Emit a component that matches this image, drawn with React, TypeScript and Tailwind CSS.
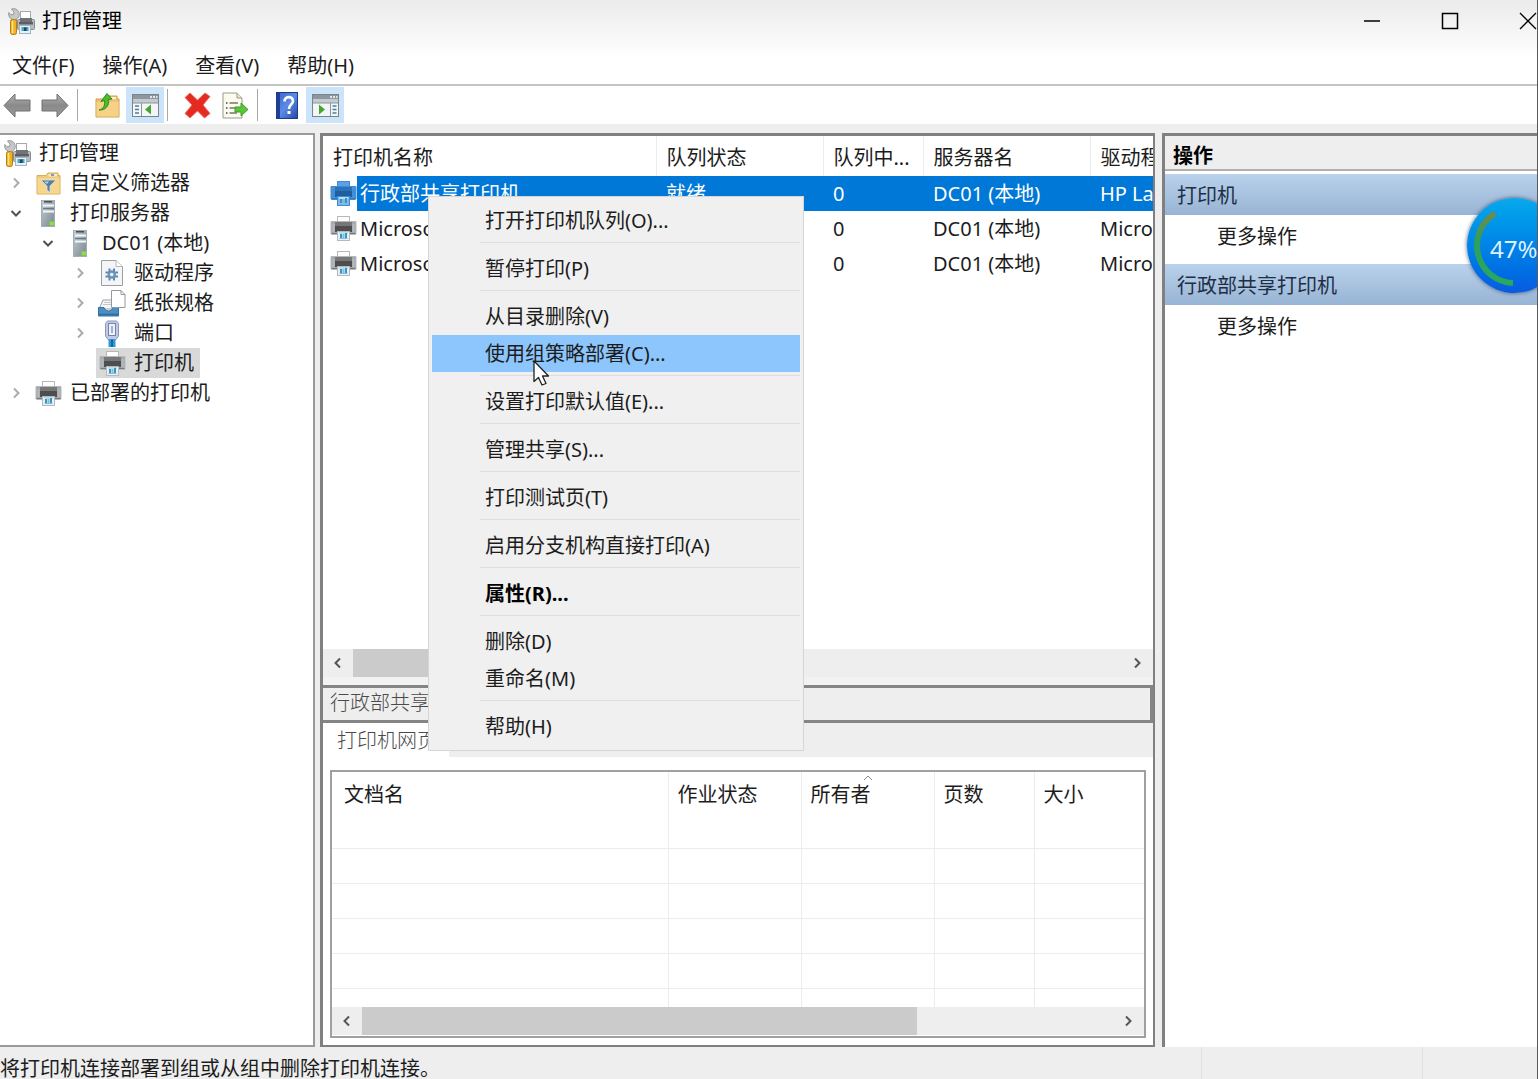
import React from "react";

/* ---------- icons ---------- */

function PrinterIcon({ selected = false }: { selected?: boolean }) {
  const c = selected
    ? { paper: "#5aa2e6", edge: "#3f8bd6", side: "#4b93d8", dark: "#1f5f9f", mid: "#2c72b8", tray: "#7fb8ee" }
    : { paper: "#fdfdfd", edge: "#b5b9bc", side: "#a4a9ad", dark: "#4e4e4e", mid: "#777777", tray: "#e6f1fa" };
  return (
    <svg width="27" height="25" viewBox="0 0 27 25" aria-hidden="true">
      <rect x="7.5" y="0.5" width="12" height="8" fill={c.paper} stroke={c.edge} />
      <path d="M1 5.500H26V17.500Q26 18.500 25 18.500H2Q1 18.500 1 17.500Z" fill={c.side} stroke={c.edge} />
      <path d="M2.500 8H4.500V16H2.500ZM22.500 8H24.500V16H22.500Z" fill={c.edge} />
      <path d="M5 6H22V11H5Z" fill={c.mid} />
      <path d="M5 10H22V16H5Z" fill={c.dark} />
      <path d="M1.500 17.500H7M20 17.500H25.500" stroke={c.dark} opacity="0.5" />
      <rect x="7.500" y="15.500" width="12" height="9" fill={c.tray} stroke={c.edge} />
      <rect x="9" y="16" width="9" height="2" fill="#bcdcf0" />
      <path d="M10 18H12V22H10ZM15 17H17V22H15Z" fill="#3b93c4" />
      <path d="M12.500 18H14.500V22H12.500Z" fill="#6fc3d2" />
      <path d="M9.500 22.500H17.500" stroke="#8fb9d6" />
    </svg>
  );
}

function ManagementIcon() {
  return (
    <svg width="27" height="27" viewBox="0 0 27 27" aria-hidden="true">
      <rect x="12.500" y="3.500" width="10" height="9" fill="#fff" stroke="#a5aaae" />
      <rect x="9.500" y="11.500" width="17" height="10" rx="1" fill="#b9bdc1" stroke="#888d92" />
      <rect x="12" y="10" width="12" height="4" fill="#707478" />
      <rect x="11" y="14" width="14" height="2.500" fill="#5c6064" />
      <rect x="11.500" y="17.500" width="11" height="8" fill="#e4f1fa" stroke="#a3b5c1" />
      <rect x="13.500" y="19" width="7" height="4" fill="#4fa3bd" />
      <rect x="16" y="19.500" width="2.500" height="3.500" fill="#0f4d66" />
      <path d="M3.500 1 6 4 5.500 6.500 3 6.800 0.800 4.500C0 8 2 10.500 4 11V13H8.500V11C11.500 9.500 12 6 10.500 3.500 9 1 6 0 3.500 1Z" fill="#c4c8cb" stroke="#85898c" strokeWidth="0.800" />
      <rect x="2.500" y="11.500" width="6" height="15" rx="2" fill="#f0b323" stroke="#b57e0d" />
      <path d="M4.500 13v12" stroke="#ffe08a" strokeWidth="1.500" />
    </svg>
  );
}

function FilterFolderIcon() {
  return (
    <svg width="25" height="23" viewBox="0 0 25 23" aria-hidden="true">
      <path d="M1 3.500H10L12 1H22V3.500H24V22H1Z" fill="#f0c979" stroke="#d9ae5b" />
      <path d="M12.500 2H21V4.500H12.500Z" fill="#fbe8bd" />
      <rect x="15" y="2" width="3" height="2" fill="#6f9fca" />
      <path d="M1.500 6H23.500V21.500H1.500Z" fill="#f7d68f" />
      <path d="M5 8H20L14 14V20.500L11 18V14Z" fill="#567f9f" stroke="#d5e5ef" strokeWidth="0.800" />
      <path d="M8 9.500H13L11 12Z" fill="#b6d4e8" />
    </svg>
  );
}

function ServerIcon() {
  return (
    <svg width="15" height="27" viewBox="0 0 15 27" aria-hidden="true">
      <defs>
        <linearGradient id="tower" x1="0" y1="0" x2="1" y2="1">
          <stop offset="0" stopColor="#c4cdd3" />
          <stop offset="1" stopColor="#788791" />
        </linearGradient>
      </defs>
      <rect x="0.500" y="0.500" width="13" height="26" fill="url(#tower)" stroke="#a3adb4" />
      <rect x="3" y="1" width="8" height="1.500" fill="#44515a" />
      <rect x="2" y="4.500" width="11" height="2" fill="#f4f7f9" />
      <rect x="2" y="8" width="11" height="1" fill="#6b7881" />
      <rect x="2" y="10.500" width="11" height="2" fill="#f4f7f9" />
      <rect x="8.500" y="21.500" width="4.500" height="4" fill="#8be03c" />
    </svg>
  );
}

function DriverIcon() {
  return (
    <svg width="22" height="26" viewBox="0 0 22 26" aria-hidden="true">
      <path d="M0.500 0.500H15L21.500 6.500V25.500H0.500Z" fill="#f4f5f6" stroke="#9a9fa3" />
      <path d="M15 0.500V6.500H21.500" fill="#fff" stroke="#b4b8bb" />
      <g stroke="#5f87ad" strokeWidth="2">
        <path d="M8.500 8.500V20.500M13 8.500V20.500M4.500 12.500H17M4.500 16.500H17" />
      </g>
      <circle cx="10.750" cy="14.500" r="4.200" fill="#6b93b8" />
      <circle cx="10.750" cy="14.500" r="1.800" fill="#f4f5f6" />
    </svg>
  );
}

function FormsIcon() {
  return (
    <svg width="28" height="27" viewBox="0 0 28 27" aria-hidden="true">
      <path d="M2 17 5 10H20V19H2Z" fill="#f5f6f7" stroke="#9ba0a4" />
      <path d="M5 14.500H16M6 12.500H14" stroke="#c4c8cb" />
      <path d="M0.500 17.500H6Q7 21 10.500 21T15 17.500H20.500V26H0.500Z" fill="#4a8ec6" stroke="#34719f" />
      <path d="M1 24.500H20" stroke="#2e6c9e" strokeWidth="1.500" />
      <path d="M13.500 0.500H23L27 4.500V17.500H13.500Z" fill="#fff" stroke="#94999d" />
      <path d="M23 0.500V4.500H27" fill="none" stroke="#94999d" />
    </svg>
  );
}

function PortIcon() {
  return (
    <svg width="16" height="27" viewBox="0 0 16 27" aria-hidden="true">
      <path d="M3.500 1H12.500L14.500 3.500V16L12 19.500H4L1.500 16V3.500Z" fill="#c0cae4" stroke="#8d99bb" />
      <rect x="4.500" y="3.500" width="7" height="12" fill="#edf1fb" stroke="#7684aa" />
      <rect x="7" y="6" width="2" height="7" fill="#a6b2cf" />
      <rect x="4.500" y="19.500" width="7" height="7.500" fill="#2b9bd8" />
      <rect x="7" y="19.500" width="2" height="7.500" fill="#1169a2" />
    </svg>
  );
}

function ArrowIcon({ forward = false }: { forward?: boolean }) {
  return (
    <svg width="28" height="25" viewBox="0 0 28 25" aria-hidden="true">
      <defs>
        <linearGradient id="steel" x1="0" y1="0" x2="0" y2="1">
          <stop offset="0" stopColor="#b2b2b2" />
          <stop offset="0.500" stopColor="#8a8a8a" />
          <stop offset="1" stopColor="#9c9c9c" />
        </linearGradient>
      </defs>
      <path
        d={forward ? "M27 12.500 16 1V7H1V18H16V24Z" : "M1 12.500 12 1V7H27V18H12V24Z"}
        fill="url(#steel)"
        stroke="#707070"
        strokeLinejoin="round"
      />
    </svg>
  );
}

function UpFolderIcon() {
  return (
    <svg width="25" height="26" viewBox="0 0 25 26" aria-hidden="true">
      <path d="M1 7H10L12 4H22V7H24V25H1Z" fill="#efc474" stroke="#cb9f4b" />
      <rect x="15" y="5" width="6" height="2" fill="#fff3d2" />
      <path d="M1.500 10H23.500V24.500H1.500Z" fill="#f6d286" />
      <path d="M4 18C9 17 10 13 9.500 8.500L6 9.500 12 1.500 17 7 13.500 7.500C14.500 13 11 18.500 4 18Z" fill="#4dbb2e" stroke="#2f8c1a" strokeLinejoin="round" />
    </svg>
  );
}

function PaneIcon({ right = false }: { right?: boolean }) {
  return (
    <svg width="27" height="23" viewBox="0 0 27 23" aria-hidden="true">
      <rect x="0.500" y="0.500" width="26" height="22" fill="#f3f5f6" stroke="#7d8489" />
      <rect x="1" y="1" width="25" height="4" fill="#8d979e" />
      <path d="M18 3H20M21 3H23M24 3H25.500" stroke="#fff" strokeWidth="1.500" />
      <rect x="1" y="5" width="25" height="4" fill="#c3cbd0" />
      <path d="M1 9H26" stroke="#8c959b" />
      {right ? (
        <>
          <path d="M18.500 9V22" stroke="#8c959b" />
          <path d="M20.500 12H24.500M20.500 15.500H24.500M20.500 19H24.500" stroke="#4d7ea8" strokeWidth="1.500" />
          <path d="M7 10.500V20.500L13 15.500Z" fill="#45a52e" />
        </>
      ) : (
        <>
          <path d="M9.500 9V22" stroke="#8c959b" />
          <path d="M3 12H7M3 15.500H7M3 19H7" stroke="#4d7ea8" strokeWidth="1.500" />
          <path d="M19 10.500V20.500L13 15.500Z" fill="#45a52e" />
        </>
      )}
    </svg>
  );
}

function DeleteIcon() {
  return (
    <svg width="27" height="27" viewBox="0 0 27 27" aria-hidden="true">
      <path
        d="M1 5.500 6 1 13.500 8 21 1 26 4.500 19 13 26 21.500 20.500 26 13.500 19 6 26 1 21.500 8 13Z"
        fill="#e32b22"
        stroke="#ee6a62"
        strokeLinejoin="round"
      />
    </svg>
  );
}

function ExportIcon() {
  return (
    <svg width="27" height="27" viewBox="0 0 27 27" aria-hidden="true">
      <path d="M1 1H15L20 6V26H1Z" fill="#fcfbef" stroke="#9b9a86" />
      <path d="M15 1V6H20" fill="#e8e6d2" stroke="#9b9a86" />
      <path d="M4 11H5.500M4 16H5.500M4 21H5.500" stroke="#444" strokeWidth="1.500" />
      <path d="M7.500 11H16M7.500 16H13M7.500 21H15" stroke="#77776a" strokeWidth="1.500" />
      <path d="M13 15H19V11L26 17.500 19 24V20H13Z" fill="#5cc43c" stroke="#3f9f27" strokeLinejoin="round" />
    </svg>
  );
}

function HelpIcon() {
  return (
    <svg width="22" height="27" viewBox="0 0 22 27" aria-hidden="true">
      <defs>
        <linearGradient id="book" x1="0" y1="0" x2="1" y2="1">
          <stop offset="0" stopColor="#3b62c8" />
          <stop offset="0.500" stopColor="#5c8be6" />
          <stop offset="1" stopColor="#2346a3" />
        </linearGradient>
      </defs>
      <rect x="0.500" y="0.500" width="21" height="26" fill="url(#book)" stroke="#1d3b8e" />
      <rect x="1" y="1" width="3" height="25" fill="#1f3f99" />
      <path d="M8.500 9.500C8.500 3.500 17 4 17 9 17 12.500 13 12.500 13 17" fill="none" stroke="#fff" strokeWidth="2.600" />
      <rect x="11.500" y="19" width="3" height="3" fill="#fff" />
    </svg>
  );
}

function Chevron({ dir, className = "" }: { dir: "left" | "right" | "down" | "up"; className?: string }) {
  const paths = {
    left: "M8 1.500 3.500 6 8 10.500",
    right: "M4 1.500 8.500 6 4 10.500",
    down: "M1.500 4 6 8.500 10.500 4",
    up: "M2 8 6 4 10 8",
  };
  return (
    <svg width="12" height="12" viewBox="0 0 12 12" fill="none" stroke="currentColor" className={className} aria-hidden="true">
      <path d={paths[dir]} />
    </svg>
  );
}

/* ---------- data ---------- */

const menus = ["文件(F)", "操作(A)", "查看(V)", "帮助(H)"];

type Node = { label: string; icon: React.ReactNode; open?: boolean; leaf?: boolean; selected?: boolean; children?: Node[] };

const tree: Node[] = [
  { label: "自定义筛选器", icon: <FilterFolderIcon /> },
  {
    label: "打印服务器",
    icon: <ServerIcon />,
    open: true,
    children: [
      {
        label: "DC01 (本地)",
        icon: <ServerIcon />,
        open: true,
        children: [
          { label: "驱动程序", icon: <DriverIcon /> },
          { label: "纸张规格", icon: <FormsIcon /> },
          { label: "端口", icon: <PortIcon /> },
          { label: "打印机", icon: <PrinterIcon />, leaf: true, selected: true },
        ],
      },
    ],
  },
  { label: "已部署的打印机", icon: <PrinterIcon /> },
];

const printers = [
  { id: 1, name: "行政部共享打印机", state: "就绪", jobs: "0", server: "DC01 (本地)", driver: "HP Las", selected: true },
  { id: 2, name: "Microsoft", state: "", jobs: "0", server: "DC01 (本地)", driver: "Micros", selected: false },
  { id: 3, name: "Microsoft", state: "", jobs: "0", server: "DC01 (本地)", driver: "Micros", selected: false },
];

const contextGroups = [
  ["打开打印机队列(O)..."],
  ["暂停打印(P)"],
  ["从目录删除(V)", "使用组策略部署(C)..."],
  ["设置打印默认值(E)..."],
  ["管理共享(S)..."],
  ["打印测试页(T)"],
  ["启用分支机构直接打印(A)"],
  ["属性(R)..."],
  ["删除(D)", "重命名(M)"],
  ["帮助(H)"],
];

/* ---------- parts ---------- */

function TreeItem({ node }: { node: Node }) {
  return (
    <li role="treeitem" aria-expanded={node.leaf ? undefined : !!node.open} aria-selected={!!node.selected}>
      <div className="flex h-[30px] items-center">
        <span className="flex w-8 shrink-0 justify-center">
          {!node.leaf && (
            <Chevron dir={node.open ? "down" : "right"} className={node.open ? "stroke-2 text-[#505050]" : "stroke-2 text-[#ababab]"} />
          )}
        </span>
        <button className={`flex h-[30px] items-center pr-1.5 ${node.selected ? "bg-[#d9d9d9]" : ""}`}>
          <span className="flex w-8 shrink-0 justify-center">{node.icon}</span>
          <span className="pl-[6px]">{node.label}</span>
        </button>
      </div>
      {node.children && (
        <ul role="group" className="pl-8">
          {node.children.map((n) => (
            <TreeItem key={n.label} node={n} />
          ))}
        </ul>
      )}
    </li>
  );
}

function ToolButton({ label, active = false, children }: { label: string; active?: boolean; children: React.ReactNode }) {
  return (
    <button aria-label={label} className={`flex h-9 w-[38px] items-center justify-center ${active ? "bg-[#cce4f9]" : ""}`}>
      {children}
    </button>
  );
}

function ToolSeparator() {
  return <span className="mr-[10px] ml-[3px] h-8 w-px bg-[#a8a8a8]" />;
}

function ScrollBar({ thumb }: { thumb: string }) {
  return (
    <div className="flex h-7 shrink-0 bg-[#eeeeee] text-[#555555]">
      <button aria-label="向左滚动" className="flex w-[30px] items-center justify-center">
        <Chevron dir="left" className="stroke-2" />
      </button>
      <div className="flex flex-1">
        <div className={`bg-[#cbcbcb] ${thumb}`} />
      </div>
      <button aria-label="向右滚动" className="flex w-8 items-center justify-center">
        <Chevron dir="right" className="stroke-2" />
      </button>
    </div>
  );
}

function ContextMenu() {
  return (
    <div role="menu" className="absolute top-[196px] left-[428px] z-10 w-[376px] border border-[#d6d6d6] bg-[#f0f0f0] px-[3px] py-[5px]">
      {contextGroups.map((group, i) => (
        <div key={group[0]}>
          {i > 0 && <div role="separator" className="mt-[3px] mb-[7px] ml-12 h-px bg-[#dedede]" />}
          {group.map((item) => (
            <button
              key={item}
              role="menuitem"
              className={`flex h-[37px] w-full items-center pl-[53px] text-left ${item.includes("(C)") ? "bg-[#8cc6fc]" : ""} ${
                item.includes("(R)") ? "font-bold text-black" : ""
              }`}
            >
              {item}
            </button>
          ))}
        </div>
      ))}
    </div>
  );
}

function PrinterTable() {
  return (
    <div className="min-h-0 flex-1 overflow-hidden">
      <table className="w-full table-fixed border-collapse text-left whitespace-nowrap">
        <colgroup>
          <col className="w-[333px]" />
          <col className="w-[167px]" />
          <col className="w-[100px]" />
          <col className="w-[167px]" />
          <col />
        </colgroup>
        <thead>
          <tr className="h-10">
            {["打印机名称", "队列状态", "队列中...", "服务器名", "驱动程"].map((h, i) => (
              <th key={h} className={`overflow-hidden pt-[3px] pl-[10px] font-normal ${i < 4 ? "border-r border-[#ececec]" : ""}`}>
                {h}
              </th>
            ))}
          </tr>
        </thead>
        <tbody>
          {printers.map((p) => (
            <tr key={p.id} className={`h-[35px] ${p.selected ? "text-white" : ""}`}>
              <td className="overflow-hidden">
                <div className="flex h-[35px] items-center">
                  <span className="flex w-[34px] shrink-0 justify-end">
                    <PrinterIcon selected={p.selected} />
                  </span>
                  <span className={`flex h-full flex-1 items-center pl-[3px] ${p.selected ? "bg-[#0078d7]" : ""}`}>{p.name}</span>
                </div>
              </td>
              {[p.state, p.jobs, p.server, p.driver].map((v, i) => (
                <td key={i} className={`overflow-hidden pl-[10px] ${p.selected ? "bg-[#0078d7]" : ""}`}>
                  {v}
                </td>
              ))}
            </tr>
          ))}
        </tbody>
      </table>
    </div>
  );
}

function JobTable() {
  return (
    <div className="h-[235px] overflow-hidden">
      <table className="w-full table-fixed border-collapse text-left whitespace-nowrap">
        <colgroup>
          <col className="w-[336px]" />
          <col className="w-[133px]" />
          <col className="w-[133px]" />
          <col className="w-[100px]" />
          <col />
        </colgroup>
        <thead>
          <tr className="h-[41px]">
            {["文档名", "作业状态", "所有者", "页数", "大小"].map((h, i) => (
              <th key={h} className={`relative pt-1 font-normal ${i === 0 ? "pl-3" : "pl-[9px]"} ${i < 4 ? "border-r border-[#ececec]" : ""}`}>
                {h === "所有者" && <Chevron dir="up" className="absolute top-0 left-[60px] text-[#8a8a8a]" />}
                {h}
              </th>
            ))}
          </tr>
        </thead>
        <tbody>
          {[0, 1, 2, 3, 4, 5].map((r) => (
            <tr key={r} className="h-[35px] border-b border-[#ececec]">
              {[0, 1, 2, 3, 4].map((c) => (
                <td key={c} className={c < 4 ? "border-r border-[#ececec]" : ""} />
              ))}
            </tr>
          ))}
        </tbody>
      </table>
    </div>
  );
}

function ActionSection({ title }: { title: string }) {
  return (
    <section className="mb-[7px]">
      <h3 className="flex h-[41px] items-center bg-linear-to-b from-[#b9d1ec] to-[#98b4d4] pt-0.5 pl-3 text-[#1e2f45]">{title}</h3>
      <button className="flex h-[42px] w-full items-center pt-0.5 pl-[52px]">更多操作</button>
    </section>
  );
}

function ProgressBall() {
  return (
    <div className="absolute top-[198px] right-[-25px] flex size-[95px] items-center rounded-full bg-linear-to-b from-[#0aa9ec] to-[#0a5be0] pl-[23px] shadow-[0_0_4px_rgba(40,60,90,0.8)]">
      <svg className="absolute inset-0" width="95" height="95" viewBox="0 0 95 95" fill="none" aria-hidden="true">
        <defs>
          <linearGradient id="arc" x1="0" y1="0" x2="0" y2="1">
            <stop offset="0" stopColor="#6f8a4c" />
            <stop offset="0.400" stopColor="#2f9f5c" />
            <stop offset="1" stopColor="#27a960" />
          </linearGradient>
        </defs>
        <path d="M28 15.500A37.500 37.500 0 0 0 46 85" stroke="url(#arc)" strokeWidth="6" />
      </svg>
      <span className="relative pt-1.5 text-2xl leading-7 text-[#dff0ff]">47%</span>
    </div>
  );
}

export default function App() {
  return (
    <div className="relative flex h-screen flex-col overflow-hidden border-r border-[#5a5a5a] bg-[#eeeeee] font-['Noto_Sans','Noto_Sans_CJK_SC',sans-serif] text-xl leading-7 text-[#1c1c1c]">
      <div className="bg-linear-to-b from-[#ebebeb] to-white to-70%">
        <header className="flex h-[42px] items-center justify-between overflow-hidden pl-2">
          <div className="flex items-center gap-[7px]">
            <ManagementIcon />
            <h1 className="text-black">打印管理</h1>
          </div>
          <div className="-mr-[30px] flex text-black">
            <button aria-label="最小化" className="flex h-[42px] w-[78px] items-center justify-center">
              <svg width="18" height="18" viewBox="0 0 18 18" stroke="currentColor" strokeWidth="1.500" aria-hidden="true">
                <path d="M1 9H17" />
              </svg>
            </button>
            <button aria-label="最大化" className="flex h-[42px] w-[78px] items-center justify-center">
              <svg width="18" height="18" viewBox="0 0 18 18" fill="none" stroke="currentColor" strokeWidth="1.500" aria-hidden="true">
                <rect x="1.500" y="1.500" width="15" height="15" />
              </svg>
            </button>
            <button aria-label="关闭" className="flex h-[42px] w-[78px] items-center justify-center">
              <svg width="18" height="18" viewBox="0 0 18 18" stroke="currentColor" strokeWidth="1.300" aria-hidden="true">
                <path d="M1 1 17 17M17 1 1 17" />
              </svg>
            </button>
          </div>
        </header>
        <nav className="flex h-[42px] items-center gap-7 pt-1.5 pl-3">
          {menus.map((m) => (
            <button key={m}>{m}</button>
          ))}
        </nav>
      </div>

      <div role="toolbar" aria-label="工具栏" className="flex h-10 shrink-0 items-center border-t-2 border-[#c4c4c4] bg-white">
        <div className="-ml-0.5 flex">
          <ToolButton label="后退">
            <ArrowIcon />
          </ToolButton>
          <ToolButton label="前进">
            <ArrowIcon forward />
          </ToolButton>
        </div>
        <ToolSeparator />
        <ToolButton label="上一级">
          <UpFolderIcon />
        </ToolButton>
        <ToolButton label="显示控制台树" active>
          <PaneIcon />
        </ToolButton>
        <ToolSeparator />
        <ToolButton label="删除">
          <DeleteIcon />
        </ToolButton>
        <ToolButton label="导出列表">
          <ExportIcon />
        </ToolButton>
        <ToolSeparator />
        <ToolButton label="帮助">
          <HelpIcon />
        </ToolButton>
        <ToolButton label="显示操作窗格" active>
          <PaneIcon right />
        </ToolButton>
      </div>

      <div className="mt-[9px] flex min-h-0 flex-1">
        <aside className="mr-[5px] w-[315px] shrink-0 border-2 border-l-0 border-[#9a9a9a] bg-white pt-[3px]">
          <div className="flex h-[30px] items-center gap-2 pl-1">
            <ManagementIcon />
            <span>打印管理</span>
          </div>
          <ul role="tree" aria-label="打印管理">
            {tree.map((n) => (
              <TreeItem key={n.label} node={n} />
            ))}
          </ul>
        </aside>

        <main className="mr-[7px] flex min-w-0 flex-1 flex-col border-t-3 border-r-2 border-b-2 border-l-3 border-[#808080] bg-white">
          <PrinterTable />
          <ScrollBar thumb="w-1/2" />
          <div className="h-2 shrink-0 bg-[#f2f2f2]" />
          <h2 className="h-[38px] shrink-0 border-y-3 border-r-3 border-[#858585] bg-[#eeeeee] pl-[7px] leading-[30px] font-light text-[#4a4a4a]">
            行政部共享打印机
          </h2>
          <div role="tablist" className="flex h-[34px] shrink-0 bg-[#eeeeee]">
            <button role="tab" aria-selected="true" className="w-[126px] bg-white pt-0.5 pl-[14px] text-left font-light text-[#4a4a4a]">
              打印机网页
            </button>
          </div>
          <div className="mx-[7px] mt-[13px] mb-[7px] shrink-0 border-2 border-[#a0a0a0] pb-px">
            <JobTable />
            <ScrollBar thumb="w-[555px]" />
          </div>
        </main>

        <aside className="w-[375px] shrink-0 border-t-3 border-l-3 border-[#808080] bg-white">
          <h2 className="mb-[3px] flex h-[35px] items-center border-b-2 border-[#b0b0b0] bg-[#eeeeee] pt-1.5 pl-2 font-bold text-black">操作</h2>
          <ActionSection title="打印机" />
          <ActionSection title="行政部共享打印机" />
        </aside>
      </div>

      <footer className="flex h-8 shrink-0 items-end overflow-hidden whitespace-nowrap">
        <p className="flex-1 leading-5">将打印机连接部署到组或从组中删除打印机连接。</p>
        <span className="h-full w-[221px] border-l border-[#e0e0e0]" />
        <span className="h-full w-[115px] border-l border-[#e0e0e0]" />
      </footer>

      <ContextMenu />
      <ProgressBall />
      <svg className="absolute top-[360px] left-[533px] z-20" width="17" height="27" viewBox="0 0 17 27" aria-hidden="true">
        <path d="M1 1V21.500L5.500 17.500 9 25 13 23.500 9.500 16H15.500Z" fill="#fff" stroke="#222" strokeWidth="1.300" strokeLinejoin="round" />
      </svg>
    </div>
  );
}
